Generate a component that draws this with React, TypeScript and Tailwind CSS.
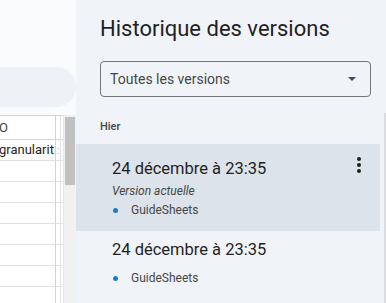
import React from 'react';

const rowLines = [139, 160, 182, 203, 224, 245, 266, 287];

function Sheet() {
  return (
    <div className="relative h-full w-[76px] shrink-0 overflow-hidden bg-[#f9fbfd]">
      {/* search pill */}
      <div className="absolute left-[-40px] top-[67px] h-[40px] w-[116px] rounded-r-[20px] bg-[#eef2f7]" />
      {/* grid */}
      <div className="absolute left-0 top-[115px] h-[200px] w-[63px] border-t border-[#d4d4d4] bg-white">
        <div className="flex h-[24px] items-center border-b border-[#d4d4d4] text-[13px] text-[#3c4043]">
          <span className="-ml-[1px]">O</span>
        </div>
        <div className="flex h-[21px] items-center border-b border-[#e1e1e1] text-[13px] text-[#1f1f1f]">
          <span className="-ml-[1px]">granularit</span>
          <span className="ml-[3px] text-[10px] text-[#c9b48a]">:</span>
        </div>
        {rowLines.slice(2).map((y) => (
          <div key={y} className="h-[21px] border-b border-[#e1e1e1]" />
        ))}
        <div className="absolute left-[55px] top-0 h-full w-px bg-[#d4d4d4]" />
        <div className="absolute left-[60px] top-0 h-full w-px bg-[#e1e1e1]" />
      </div>
      {/* scrollbar */}
      <div className="absolute left-[63px] top-[115px] h-[200px] w-[13px] border-l border-[#e6e6e6] bg-[#f1f1f1]">
        <div className="ml-[1px] mt-[2px] h-[68px] w-[10px] bg-[#c1c1c1]" />
      </div>
    </div>
  );
}

function Item({ current }: { current?: boolean }) {
  return (
    <div
      className={`relative flex flex-col pl-[36px] ${
        current ? 'h-[87px] bg-[#dde3ea] pt-[14px]' : 'h-[72px] pt-[8px]'
      }`}
    >
      <div className="text-[16.5px] leading-[22px] text-[#1f1f1f]">24 décembre à 23:35</div>
      {current ? (
        <div className="mt-[3px] text-[12px] italic leading-[16px] text-[#444746]">Version actuelle</div>
      ) : null}
      <div
        className={`flex items-center text-[12px] leading-[16px] text-[#444746] ${
          current ? 'mt-[3px]' : 'mt-[9px]'
        }`}
      >
        <span className="ml-[1px] h-[5px] w-[5px] rounded-full bg-[#1a80c6]" />
        <span className="ml-[13px]">GuideSheets</span>
      </div>
      {current ? (
        <div className="absolute right-[19px] top-[13px] flex flex-col gap-[2px]">
          <span className="h-[4px] w-[4px] rounded-full bg-[#1f1f1f]" />
          <span className="h-[4px] w-[4px] rounded-full bg-[#1f1f1f]" />
          <span className="h-[4px] w-[4px] rounded-full bg-[#1f1f1f]" />
        </div>
      ) : null}
    </div>
  );
}

export default function App() {
  return (
    <div
      className="flex h-[303px] w-[386px] overflow-hidden"
      style={{ fontFamily: 'Roboto, "Liberation Sans", sans-serif' }}
    >
      <Sheet />
      <div className="relative flex h-full flex-1 flex-col bg-[#f0f4f9]">
        <h1 className="ml-[24px] mt-[15px] text-[22px] leading-[28px] text-[#1f1f1f]">
          Historique des versions
        </h1>
        <div className="ml-[24px] mt-[18px] flex h-[36px] w-[271px] items-center justify-between rounded-[4px] border border-[#747775] pl-[9px] pr-[14px]">
          <span className="text-[14px] text-[#444746]">Toutes les versions</span>
          <svg width="8" height="4" viewBox="0 0 8 4">
            <path d="M0 0 L8 0 L4 4 Z" fill="#3c4a6b" />
          </svg>
        </div>
        <div className="ml-[24px] mt-[22px] text-[11px] font-medium leading-[16px] text-[#444746]">Hier</div>
        <div className="mr-[6px] mt-[9px] flex flex-col">
          <Item current />
          <Item />
        </div>
        <div className="absolute right-0 top-[113px] h-[190px] w-[2px] bg-[#dadce0]" />
      </div>
    </div>
  );
}
